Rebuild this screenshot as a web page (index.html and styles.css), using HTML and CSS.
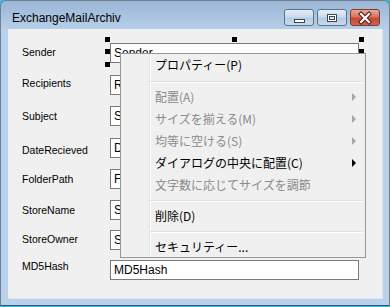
FILE: index.html
```html
<!DOCTYPE html>
<html>
<head>
<meta charset="utf-8">
<link rel="stylesheet" href="styles.css">
</head>
<body>
<div class="window">
  <div class="titlebar">
    <span class="title">ExchangeMailArchiv</span>
    <div class="caption-buttons">
      <div class="cap">
        <svg width="30" height="16" viewBox="0 0 30 16"><rect x="10.5" y="9.5" width="10" height="3" fill="#fff" stroke="#3a4656"/></svg>
      </div>
      <div class="cap">
        <svg width="30" height="16" viewBox="0 0 30 16"><rect x="10.5" y="4.5" width="9" height="7" fill="#fff" stroke="#3a4656"/><rect x="12.5" y="6.5" width="5" height="3" fill="#dfe6ee" stroke="#3a4656"/></svg>
      </div>
      <div class="cap close">
        <svg width="30" height="16" viewBox="0 0 30 16"><path d="M11 4 L19 12 M19 4 L11 12" stroke="#4a1c16" stroke-width="4.2" stroke-linecap="square"/><path d="M11 4 L19 12 M19 4 L11 12" stroke="#fff" stroke-width="2.2" stroke-linecap="square"/></svg>
      </div>
    </div>
  </div>
  <div class="client">
    <div class="form">
      <div class="lbl o3">Sender</div>
      <div class="field">
        <div class="box">Sender</div>
        <span class="h tl"></span><span class="h tm"></span><span class="h tr"></span>
        <span class="h ml"></span><span class="h mr"></span>
        <span class="h bl"></span><span class="h bm"></span><span class="h br"></span>
      </div>
      <div class="lbl o2">Recipients</div>
      <div class="field"><div class="box">R</div></div>
      <div class="lbl o4">Subject</div>
      <div class="field"><div class="box">S</div></div>
      <div class="lbl o6">DateRecieved</div>
      <div class="field"><div class="box">D</div></div>
      <div class="lbl o4">FolderPath</div>
      <div class="field"><div class="box">F</div></div>
      <div class="lbl o4">StoreName</div>
      <div class="field"><div class="box">S</div></div>
      <div class="lbl o3">StoreOwner</div>
      <div class="field"><div class="box">S</div></div>
      <div class="lbl o0">MD5Hash</div>
      <div class="field"><div class="box">MD5Hash</div></div>
    </div>
    <div class="menu">
      <div class="item">プロパティー(P)</div>
      <div class="sep first"></div>
      <div class="item dis">配置(A)<span class="arrow"></span></div>
      <div class="item dis">サイズを揃える(M)<span class="arrow"></span></div>
      <div class="item dis">均等に空ける(S)<span class="arrow"></span></div>
      <div class="item">ダイアログの中央に配置(C)<span class="arrow"></span></div>
      <div class="item dis">文字数に応じてサイズを調節</div>
      <div class="sep"></div>
      <div class="item">削除(D)</div>
      <div class="sep"></div>
      <div class="item">セキュリティー...</div>
    </div>
  </div>
</div>
</body>
</html>
```

FILE: styles.css
```css
html, body {
  margin: 0;
  padding: 0;
}
body {
  width: 390px;
  height: 307px;
  overflow: hidden;
  background: #37bfdc;
  font-family: "Liberation Sans", Arial, sans-serif;
}
.window {
  box-sizing: border-box;
  width: 390px;
  height: 306px;
  display: flex;
  flex-direction: column;
  background: linear-gradient(to bottom, #9ab6d5 0px, #aac4e1 16px, #b9d1ea 30px, #b9d1ea 100%);
  border: 1px solid #6f8195;
  border-bottom-color: #3e5064;
  border-radius: 6px 6px 0 0;
}
.titlebar {
  height: 28px;
  display: flex;
  align-items: flex-start;
  justify-content: space-between;
  padding-left: 11px;
  flex: none;
}
.title {
  margin-top: 9px;
  font-size: 12px;
  line-height: 16px;
  color: #000;
}
.caption-buttons {
  display: flex;
  gap: 3px;
  margin-top: 8px;
  margin-right: 9px;
}
.cap {
  box-sizing: border-box;
  width: 30px;
  height: 17px;
  border: 1px solid #5b728c;
  border-radius: 3px;
  background: linear-gradient(to bottom, #e4edf7 0%, #cbdbed 45%, #b7cbe2 55%, #c9daee 100%);
  display: flex;
  align-items: center;
  justify-content: center;
  overflow: hidden;
}
.cap svg {
  display: block;
  flex: none;
}
.cap.close {
  border-color: #7d3a30;
  background: linear-gradient(to bottom, #e9a898 0%, #d7735f 45%, #c5492f 55%, #d0644d 100%);
}
.client {
  position: relative;
  flex: 1;
  margin: 0 7px 7px 7px;
  background: #f0f0f0;
  box-shadow: 1px 1px 0 #dbe7f4;
}
.form {
  display: grid;
  grid-template-columns: 88px 249px;
  grid-template-rows: 32px 31px 32px 31px 31px 30px 30px 20px;
  padding: 14px 0 0 14px;
}
.lbl {
  font-size: 10.5px;
  line-height: 13px;
  color: #000;
  white-space: nowrap;
}
.o0 { margin-top: 0; }
.o2 { margin-top: 2px; }
.o3 { margin-top: 3px; }
.o4 { margin-top: 4px; }
.o6 { margin-top: 6px; }
.field {
  position: relative;
  height: 20px;
}
.box {
  box-sizing: border-box;
  height: 20px;
  border: 1px solid #7a7a7a;
  background: #fff;
  font-size: 12px;
  line-height: 18px;
  padding: 0 3px;
  white-space: nowrap;
  overflow: hidden;
  color: #000;
}
.h {
  position: absolute;
  width: 5px;
  height: 5px;
  background: #000;
}
.tl { left: -5px; top: -6px; }
.tm { left: 122px; top: -6px; }
.tr { left: 249px; top: -6px; }
.ml { left: -5px; top: 6px; }
.mr { left: 249px; top: 6px; }
.bl { left: -5px; top: 19px; }
.bm { left: 122px; top: 19px; }
.br { left: 249px; top: 19px; }
.menu {
  position: absolute;
  left: 112px;
  top: 24px;
  box-sizing: border-box;
  width: 246px;
  border: 1px solid #979797;
  background: linear-gradient(to right, transparent 28px, #e2e3e3 28px, #e2e3e3 29px, #ffffff 29px, #ffffff 30px, transparent 30px), #f0f0f0;
  font-family: "Noto Sans CJK JP", "Noto Sans", sans-serif;
  font-size: 12px;
}
.item {
  height: 22px;
  line-height: 22px;
  display: flex;
  align-items: center;
  padding-left: 34px;
  color: #000;
  white-space: nowrap;
}
.item.dis {
  color: #8a8a8a;
}
.arrow {
  margin-left: auto;
  margin-right: 9px;
  width: 0;
  height: 0;
  border-left: 4px solid #000;
  border-top: 4px solid transparent;
  border-bottom: 4px solid transparent;
}
.item.dis .arrow {
  border-left-color: #a6a6a6;
}
.sep {
  height: 9px;
  margin-left: 29px;
  margin-right: 2px;
  background: linear-gradient(to bottom, transparent 4px, #e0e0e0 4px, #e0e0e0 5px, #ffffff 5px, #ffffff 6px, transparent 6px);
}
.sep.first {
  height: 10px;
  background: linear-gradient(to bottom, transparent 5px, #e0e0e0 5px, #e0e0e0 6px, #ffffff 6px, #ffffff 7px, transparent 7px);
}
.menu .item:last-child {
  height: 21px;
  line-height: 21px;
}
```
